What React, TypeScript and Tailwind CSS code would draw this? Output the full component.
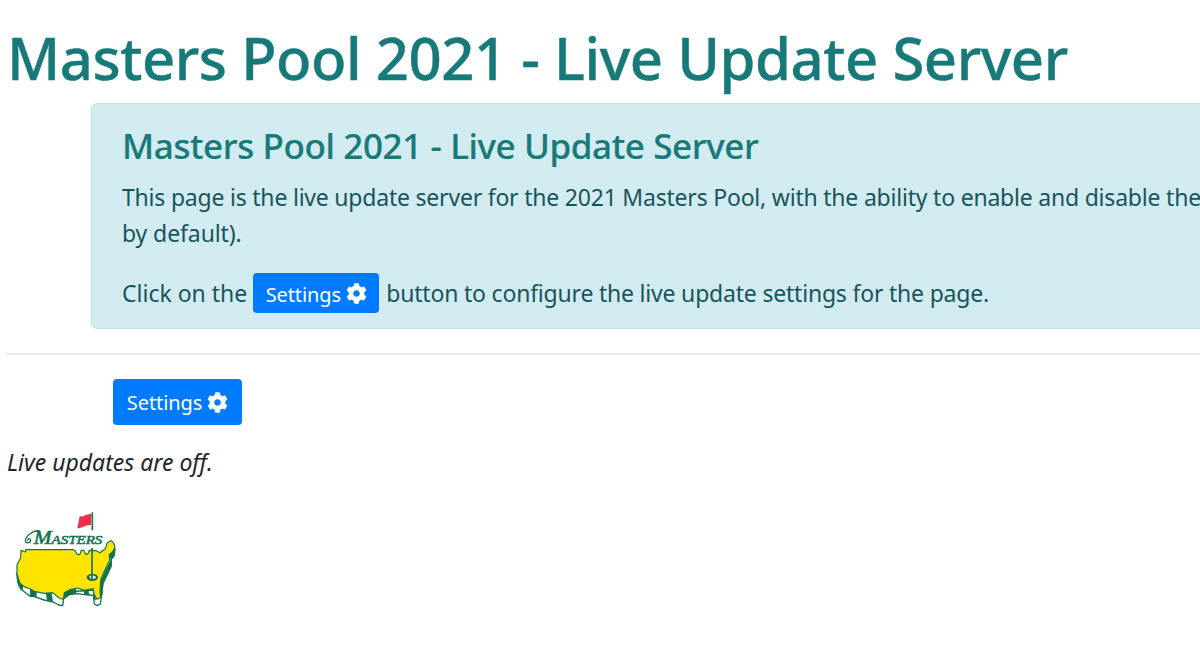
import { FaCog } from "react-icons/fa";

function MastersLogo() {
  return (
    <svg width="130" height="120" viewBox="0 0 390 360" role="img" aria-label="Masters" className="block">
      <path
        d="M51 218 C51 238 54 255 62 266 L66 270 L90 289 L104 290 L132 300 L160 306 L176 315 L188 317 L191 296 L208 284 L230 281 L252 284 L268 285 L280 286 L283 312 L292 317 L301 312 L306 278 L309 250 L323 222 L334 198 L334 178 L343 167 L345 145 L320 160 L290 270 L190 276 L70 250 Z"
        fill="#fff"
        stroke="#17724e"
        strokeWidth="4"
        strokeLinejoin="round"
      />
      <path
        d="M49 215 L52 245 L60 264 L68 271 L70 256 L59 245 Z M90 264 L110 273 L110 291 L90 289 Z M137 279 L155 280 L159 305 L141 301 Z M191 273 L214 265 L228 262 L229 281 L209 284 L193 296 Z M249 268 L264 266 L268 285 L253 284 Z M278 269 L286 285 L288 302 L281 297 Z M301 245 L315 212 L332 180 L334 198 L310 250 L307 285 L300 295 Z M328 164 L345 148 L343 168 L332 181 Z"
        fill="#17724e"
      />
      <path
        d="M63 151 L77 156 L77 149 L220 149 L226 153 L231 163 L239 164 L244 151 L251 151 L257 163 L264 161 L268 151 L289 152 L300 158 L316 146 L322 128 L333 122 L341 129 L345 142 L338 155 L328 164 L329 181 L315 209 L302 239 L300 277 L302 292 L291 298 L282 282 L280 266 L252 271 L234 264 L210 269 L193 278 L190 298 L177 294 L158 278 L132 280 L103 274 L91 267 L72 260 L59 248 L51 222 L51 194 L62 173 Z"
        fill="#ffe400"
        stroke="#17724e"
        strokeWidth="3.5"
        strokeLinejoin="round"
      />
      <ellipse cx="277" cy="232" rx="17" ry="11" fill="#17724e" />
      <path d="M268 231 C270 225 285 225 288 232 C284 239 271 239 268 231" fill="#f7faea" />
      <path d="M276 144 V237" stroke="#17724e" strokeWidth="5" />
      <path d="M277 37 V91" stroke="#17724e" strokeWidth="5" />
      <path d="M239 49 C250 52 260 40 274 42 L273 75 C258 73 247 84 232 85 Z" fill="#ee3047" />
      <path
        d="M118 93 C101 88 78 108 76 121 C76 132 91 129 92 121 C91 114 83 115 83 121"
        fill="none"
        stroke="#17724e"
        strokeWidth="4"
        strokeLinecap="round"
      />
      <text
        x="101"
        y="131"
        fill="#17724e"
        stroke="#17724e"
        strokeWidth="1.8"
        className="font-['Liberation_Serif',serif] italic"
        textLength="206"
        lengthAdjust="spacingAndGlyphs"
      >
        <tspan fontSize="57">M</tspan>
        <tspan fontSize="40">ASTERS</tspan>
      </text>
    </svg>
  );
}

export default function App() {
  return (
    <main className="h-[650px] w-[1200px] overflow-hidden bg-white pl-[7px] pt-[21px] font-['Noto_Sans',sans-serif] text-[23px] leading-9 text-[#212529]">
      <h1 className="h-[82px] whitespace-nowrap text-[58px] font-medium leading-[73px] tracking-[-0.47px] text-[#177a79] [-webkit-text-stroke:0.4px_#177a79]">
        Masters Pool 2021 - Live Update Server
      </h1>
      <section className="ml-[84px] h-[226px] w-[1400px] rounded-md border border-[#bee5eb] bg-[#d2ebf0] pl-[30px] pt-[20px] text-[#17555c]">
        <h2 className="h-[55px] whitespace-nowrap text-[35px] font-medium leading-[43px] tracking-[-0.38px] text-[#177a79] [-webkit-text-stroke:0.2px_#177a79]">
          Masters Pool 2021 - Live Update Server
        </h2>
        <p className="whitespace-nowrap tracking-[-0.21px]">
          <span className="block">
            This page is the live update server for the 2021 Masters Pool, with the ability to enable and disable the
          </span>
          <span className="block tracking-[-0.1px]">by default).</span>
        </p>
        <div className="mt-[22px] flex h-10 items-center whitespace-nowrap">
          <span>Click on the</span>
          <button className="ml-1.5 mr-[7px] flex h-10 w-[126px] items-center justify-center gap-[5px] rounded bg-[#007bff] pt-[3px] text-[20px] tracking-[-0.1px] text-white">
            <span>Settings</span>
            <FaCog className="mb-[3px] size-[21px]" />
          </button>
          <span className="tracking-[-0.2px]">button to configure the live update settings for the page.</span>
        </div>
      </section>
      <hr className="mt-6 h-0.5 border-0 bg-[#e8e8e8]" />
      <button className="ml-[106px] mt-6 flex h-[46px] w-[129px] items-center justify-center gap-[5px] rounded bg-[#007bff] pt-0.5 text-[20px] tracking-[-0.1px] text-white">
        <span>Settings</span>
        <FaCog className="mb-0.5 size-[21px]" />
      </button>
      <p className="mt-[19px] whitespace-nowrap italic">Live updates are off.</p>
      <div className="-ml-[7px] mt-5">
        <MastersLogo />
      </div>
    </main>
  );
}
